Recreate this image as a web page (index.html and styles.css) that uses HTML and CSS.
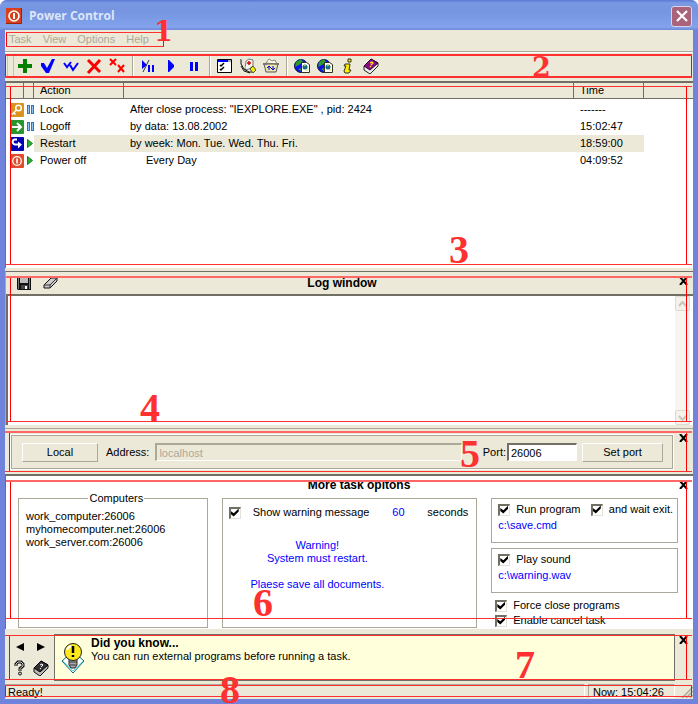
FILE: index.html
```html
<!DOCTYPE html>
<html lang="en">
<head>
    <meta charset="UTF-8">
    <meta name="viewport" content="width=device-width, initial-scale=1.0">
    <title>Power Control</title>
    <link rel="stylesheet" href="styles.css">
</head>
<body>
<div class="window">
    <header class="titlebar">
        <svg class="app-icon" width="16" height="16" viewBox="0 0 16 16"><rect width="16" height="16" fill="#d8401c"/><path d="M0 15.500h15.500V0" fill="none" stroke="#9c2408"/><circle cx="8" cy="8" r="5" fill="none" stroke="#fff" stroke-width="1.600"/><path d="M8 5v6" stroke="#fff" stroke-width="2"/></svg>
        <h1>Power Control</h1>
        <button class="win-close" aria-label="Close window"><svg width="12" height="12" viewBox="0 0 12 12"><path d="M1 1l10 10M11 1L1 11" stroke="#fff" stroke-width="2.200"/></svg></button>
    </header>

    <nav class="menubar section">
        <a href="#">Task</a>
        <a href="#">View</a>
        <a href="#">Options</a>
        <a href="#">Help</a>
        <span class="mark mark-menu"></span>
        <span class="num num-small num-1">1</span>
    </nav>

    <div class="toolbar section">
        <span class="grip"></span>
        <button aria-label="Add"><svg viewBox="0 0 16 16"><path d="M6 1h4v5h5v4h-5v5H6v-5H1V6h5z" fill="#008000"/></svg></button>
        <button aria-label="Apply"><svg viewBox="0 0 16 16"><path d="M1 5h3l3 5 5-9h3L9 15H6L1 8z" fill="#00f"/></svg></button>
        <button aria-label="Apply all"><svg viewBox="0 0 16 16"><path d="M1 5l3 4 4-5M7 7l3 5 5-7" fill="none" stroke="#00f" stroke-width="2"/></svg></button>
        <button aria-label="Delete"><svg viewBox="0 0 16 16"><path d="M2 2l12 12M14 2L2 15" stroke="#f00" stroke-width="3"/></svg></button>
        <button aria-label="Delete all"><svg viewBox="0 0 16 16"><path d="M1 1l6 6M7 1L1 7M9 7l6 7M15 7l-6 7" stroke="#f00" stroke-width="2"/></svg></button>
        <span class="sep"></span>
        <button aria-label="Start or pause"><svg viewBox="0 0 16 16"><path d="M2 2l5 5-5 4zM8 7h2v7H8zM12 7h2v7h-2z" fill="#00f"/><path d="M3 14l6-12" stroke="#334"/></svg></button>
        <button aria-label="Start"><svg viewBox="0 0 16 16"><path d="M5 2h1l5 5v2l-5 5H5z" fill="#00f"/></svg></button>
        <button aria-label="Pause"><svg viewBox="0 0 16 16"><path d="M4 4h3v9H4zM9 4h3v9H9z" fill="#00f"/></svg></button>
        <span class="sep"></span>
        <button aria-label="Task options"><svg viewBox="0 0 16 16"><path d="M.5 1.500h14v13H.5z" fill="#fff" stroke="#000"/><path d="M1 2h13v2H1z" fill="#00f"/><path d="M11 2h3v2h-3z" fill="#aaa"/><path d="M3 7l1 1 3-3M3 11l1 1 3-3" fill="none" stroke="#000" stroke-width="1.500"/></svg></button>
        <button aria-label="Diagnostics"><svg viewBox="0 0 16 16"><path d="M6 3l3-2 4 1v6l-4 3-4 1z" fill="#f4f4ee" stroke="#777"/><path d="M9 3v4M7 5h4" stroke="#d00" stroke-width="1.500"/><path d="M1 1v5l3 5 5 3h3M1 8l3 5 6 2" fill="none" stroke="#111"/><path d="M1 1h2v5l3 4" fill="none" stroke="#ddd"/><path d="M10 11l3-3 3 4-3 3z" fill="#ee0" stroke="#552"/></svg></button>
        <button aria-label="Update"><svg viewBox="0 0 16 16"><path d="M3 5l3-4 3 2 3-1 2 4z" fill="#ffd" stroke="#888"/><path d="M1 6h14l-2 8H3z" fill="#eee8b0" stroke="#555"/><path d="M0 5h4v2H0zM12 5h4v2h-4z" fill="#777"/><path d="M6 12V8M4 10l2-2 2 2M10 8v4M8 10l2 2 2-2" fill="none" stroke="#00c"/></svg></button>
        <span class="sep"></span>
        <button aria-label="Web site"><svg viewBox="0 0 16 16"><circle cx="7" cy="8" r="6.500" fill="#11e" stroke="#114"/><path d="M2 4l5-3 2 3-4 3-4 2zM4 11l4-1v4z" fill="#299a30"/><path d="M7.500 4.500h5l3 2v8h-8z" fill="#fff" stroke="#332"/><circle cx="11" cy="9" r="2.500" fill="#176a8a"/><path d="M10 8l2-1M12 12h2" stroke="#cd3"/></svg></button>
        <button aria-label="Forum"><svg viewBox="0 0 16 16"><circle cx="7" cy="8" r="6.500" fill="#11e" stroke="#114"/><path d="M2 4l5-3 2 3-4 3-4 2zM4 11l4-1v4z" fill="#299a30"/><path d="M7.500 4.500h5l3 2v8h-8z" fill="#fff" stroke="#332"/><circle cx="11" cy="9" r="2.500" fill="#176a8a"/><path d="M10 8l2-1M12 12h2" stroke="#cd3"/></svg></button>
        <button aria-label="About"><svg viewBox="0 0 16 16"><path d="M8 1h3v3H8zM5 6h5l-1 6h2l-2 3H5l-1-2 2-5H4z" fill="#fe0" stroke="#332"/></svg></button>
        <button aria-label="Help"><svg viewBox="0 0 16 16"><path d="M1 8l7-7 7 4v3l-8 8-6-4z" fill="#eee" stroke="#222"/><path d="M1 8l7-7 7 4-8 7z" fill="#8a0a8a" stroke="#303"/><path d="M7 5l2-1 1 1-2 2M7 8l1 1" fill="none" stroke="#fe0" stroke-width="1.300"/></svg></button>
        <span class="mark"></span>
        <span class="num num-small num-2">2</span>
    </div>

    <main class="tasks section">
        <table>
            <colgroup><col class="c-icon"><col class="c-state"><col class="c-action"><col><col class="c-time"><col class="c-rest"></colgroup>
            <thead>
                <tr><th></th><th></th><th>Action</th><th></th><th>Time</th><th></th></tr>
            </thead>
            <tbody>
                <tr>
                    <td><svg width="14" height="14" viewBox="0 0 14 14"><rect width="14" height="14" rx="1" fill="#d99420"/><circle cx="8.500" cy="5" r="2.800" fill="none" stroke="#fff" stroke-width="1.500"/><path d="M6.500 7L2 11.500M4 10l1.500 1.500" stroke="#fff" stroke-width="1.500"/></svg></td>
                    <td><svg width="8" height="9" viewBox="0 0 8 9"><path d="M0 0h3v9H0zM4 0h3v9H4z" fill="#2878c8"/><path d="M1.500 1v7M5.500 1v7" stroke="#8cc4f4"/></svg></td>
                    <td>Lock</td><td>After close process: "IEXPLORE.EXE" , pid: 2424</td><td>-------</td><td></td>
                </tr>
                <tr>
                    <td><svg width="14" height="14" viewBox="0 0 14 14"><rect width="14" height="14" rx="1" fill="#27962c"/><path d="M2 7h9M7 3l4 4-4 4" fill="none" stroke="#fff" stroke-width="2"/></svg></td>
                    <td><svg width="8" height="9" viewBox="0 0 8 9"><path d="M0 0h3v9H0zM4 0h3v9H4z" fill="#2878c8"/><path d="M1.500 1v7M5.500 1v7" stroke="#8cc4f4"/></svg></td>
                    <td>Logoff</td><td>by data: 13.08.2002</td><td>15:02:47</td><td></td>
                </tr>
                <tr class="selected">
                    <td><svg width="14" height="14" viewBox="0 0 14 14"><rect width="14" height="14" rx="1" fill="#0000b4"/><path d="M7 2.500H4.500C2 3 2 7 5 7.500h5" fill="none" stroke="#fff" stroke-width="2"/><path d="M8 4.500l4 3-4 4z" fill="#fff"/></svg></td>
                    <td><svg width="8" height="9" viewBox="0 0 8 9"><path d="M.5 .5v8l5-4z" fill="#2fae3a" stroke="#128018"/></svg></td>
                    <td>Restart</td><td>by week: Mon. Tue. Wed. Thu. Fri.</td><td>18:59:00</td><td></td>
                </tr>
                <tr>
                    <td><svg width="14" height="14" viewBox="0 0 14 14"><rect width="14" height="14" rx="1" fill="#e04c2c"/><circle cx="7" cy="7" r="4.300" fill="none" stroke="#fff" stroke-width="1.300"/><path d="M7 4.500v5" stroke="#fff" stroke-width="1.600"/></svg></td>
                    <td><svg width="8" height="9" viewBox="0 0 8 9"><path d="M.5 .5v8l5-4z" fill="#2fae3a" stroke="#128018"/></svg></td>
                    <td>Power off</td><td class="indent">Every Day</td><td>04:09:52</td><td></td>
                </tr>
            </tbody>
        </table>
        <span class="mark"></span>
        <span class="num num-3">3</span>
    </main>

    <section class="log section">
        <div class="log-head">
            <div class="log-tools">
                <button aria-label="Save log"><svg width="14" height="14" viewBox="0 0 14 14"><path d="M0 0h14v14H1l-1-1z" fill="#111"/><path d="M3 1h8v6H3z" fill="#bbb"/><path d="M4 9h7v4H4z" fill="#444"/><path d="M8 10h2v3H8z" fill="#fff"/><path d="M1.500 1v12M12.500 2v11" stroke="#777"/></svg></button>
                <button aria-label="Clear log"><svg width="16" height="14" viewBox="0 0 16 14"><path d="M1 9l7-7h6v3l-7 7H1z" fill="#ccc" stroke="#111"/><path d="M1 9h6l7-7M7 9v3" fill="none" stroke="#333"/></svg></button>
            </div>
            <h2>Log window</h2>
        </div>
        <button class="close" aria-label="Close log"><svg width="9" height="8" viewBox="0 0 9 8"><path d="M1 0l7 8M8 0L1 8" stroke="#000" stroke-width="2"/></svg></button>
        <div class="log-body">
            <textarea aria-label="Log" readonly></textarea>
            <div class="scroll">
                <button disabled aria-label="Scroll up"><svg width="9" height="6" viewBox="0 0 9 6"><path d="M1 5l3.500-4L8 5" fill="none" stroke="#c9c7ba" stroke-width="2"/></svg></button>
                <button disabled aria-label="Scroll down"><svg width="9" height="6" viewBox="0 0 9 6"><path d="M1 1l3.500 4L8 1" fill="none" stroke="#c9c7ba" stroke-width="2"/></svg></button>
            </div>
        </div>
        <span class="mark"></span>
        <span class="num num-4">4</span>
    </section>

    <section class="remote section">
        <div class="remote-box">
            <button class="btn">Local</button>
            <label for="address">Address:</label>
            <input id="address" class="address" type="text" value="localhost" disabled>
            <label for="port">Port:</label>
            <input id="port" class="port" type="text" value="26006">
            <button class="btn btn-port">Set port</button>
        </div>
        <button class="close" aria-label="Close connection panel"><svg width="9" height="8" viewBox="0 0 9 8"><path d="M1 0l7 8M8 0L1 8" stroke="#000" stroke-width="2"/></svg></button>
        <span class="mark"></span>
        <span class="num num-5">5</span>
    </section>

    <section class="options section">
        <h2>More task opitons</h2>
        <button class="close" aria-label="Close options"><svg width="9" height="8" viewBox="0 0 9 8"><path d="M1 0l7 8M8 0L1 8" stroke="#000" stroke-width="2"/></svg></button>
        <div class="option-cols">
            <div class="box computers">
                <h3>Computers</h3>
                <p>work_computer:26006</p>
                <p>myhomecomputer.net:26006</p>
                <p>work_server.com:26006</p>
            </div>
            <div class="box warning">
                <div class="warning-head">
                    <label><input type="checkbox" checked> Show warning message</label>
                    <span class="value">60</span>
                    <span>seconds</span>
                </div>
                <p class="message value">Warning!<br>System must restart.<br><br>Plaese save all documents.</p>
            </div>
            <div class="actions">
                <div class="box action">
                    <div class="checks">
                        <label><input type="checkbox" checked> Run program</label>
                        <label><input type="checkbox" checked> and wait exit.</label>
                    </div>
                    <p class="value">c:\save.cmd</p>
                </div>
                <div class="box action">
                    <div class="checks">
                        <label><input type="checkbox" checked> Play sound</label>
                    </div>
                    <p class="value">c:\warning.wav</p>
                </div>
                <div class="extra">
                    <label><input type="checkbox" checked> Force close programs</label>
                    <label><input type="checkbox" checked> Enable cancel task</label>
                </div>
            </div>
        </div>
        <span class="mark"></span>
        <span class="num num-6">6</span>
    </section>

    <section class="tips section">
        <div class="tip-nav">
            <button aria-label="Previous tip"><svg width="16" height="16" viewBox="0 0 16 16"><path d="M12 4v8L4 8z"/></svg></button>
            <button aria-label="Next tip"><svg width="16" height="16" viewBox="0 0 16 16"><path d="M4 4v8l8-4z"/></svg></button>
            <button aria-label="Tip help"><svg width="16" height="16" viewBox="0 0 16 16"><path d="M4 6V4l2-2h3l2 2v2L8 8.500V11" fill="none" stroke="#111" stroke-width="3"/><path d="M4 6V4l2-2h3l2 2v2L8 8.500V11" fill="none" stroke="#ccc"/><circle cx="8" cy="13.500" r="1.500" fill="#ccc" stroke="#111"/></svg></button>
            <button aria-label="Tip contents"><svg width="16" height="16" viewBox="0 0 16 16"><path d="M1 8l7-7 7 4v3l-8 8-6-4z" fill="#bbb" stroke="#111"/><path d="M1 8l7-7 7 4-8 7z" fill="#333" stroke="#000"/><path d="M7 5l2-1 1 1-2 2M7 8l1 1" fill="none" stroke="#fff"/></svg></button>
        </div>
        <div class="tip">
            <svg width="24" height="32" viewBox="0 0 24 32"><path d="M1 19l11-10 11 10-11 12z" fill="#fff" stroke="#066a7a"/><path d="M2 19l10 10 10-10" fill="none" stroke="#6de" stroke-width="1"/><path d="M8 17h8v6l-2 3h-4l-2-3z" fill="#aaa" stroke="#222"/><path d="M8 20h8M9 23h6" stroke="#333"/><circle cx="12" cy="10" r="8.500" fill="#fde820" stroke="#222"/><path d="M6 8a6 6 0 0 1 4-4" fill="none" stroke="#fff" stroke-width="2"/><path d="M12 4v7M12 13v2" stroke="#000" stroke-width="2.500"/></svg>
            <div>
                <h2>Did you know...</h2>
                <p>You can run external programs before running a task.</p>
            </div>
        </div>
        <button class="close" aria-label="Close tips"><svg width="9" height="8" viewBox="0 0 9 8"><path d="M1 0l7 8M8 0L1 8" stroke="#000" stroke-width="2"/></svg></button>
        <span class="mark"></span>
        <span class="num num-7">7</span>
    </section>

    <footer class="status section">
        <span class="ready">Ready!</span>
        <span class="now">Now: 15:04:26</span>
        <svg class="resize" width="12" height="12" viewBox="0 0 12 12"><path d="M1 12L12 1M5 12l7-7M9 12l3-3" stroke="#aca899" stroke-width="1.500"/></svg>
        <span class="mark"></span>
        <span class="num num-8">8</span>
    </footer>
</div>
</body>
</html>
```
FILE: styles.css
```css
* {
    box-sizing: border-box;
}
body {
    margin: 0;
    background: #fff;
    color: #000;
    font: 11px/13px "Liberation Sans", Arial, sans-serif;
}
h1, h2, h3, p {
    margin: 0;
    font-weight: normal;
}
h2 {
    font-size: 12px;
    font-weight: bold;
}
button, input, textarea {
    margin: 0;
    padding: 0;
    font: inherit;
    color: inherit;
}
button {
    border: 0;
    background: none;
}
svg {
    display: block;
}
.window {
    display: flex;
    flex-direction: column;
    min-height: 100vh;
    border: 5px solid #6f83dc;
    border-top: 0;
    border-radius: 7px 7px 0 0;
    background: #ece9d8;
}
.section {
    position: relative;
}

/* title bar */
.titlebar {
    display: flex;
    align-items: center;
    height: 30px;
    margin: 0 -5px;
    padding: 2px 6px 0;
    border-radius: 7px 7px 0 0;
    background: linear-gradient(#5c76d4 0, #7b9ae4 3px, #7694e0 10px, #7d9ee8 22px, #84a4ec 27px, #6e88d8 30px);
}
.titlebar h1 {
    flex: 1;
    margin-left: 7px;
    color: #dce6f8;
    font: bold 12px/18px "Open Sans", sans-serif;
}
.win-close {
    display: grid;
    place-items: center;
    width: 21px;
    height: 21px;
    border: 1px solid #dcd4ec;
    border-radius: 3px;
    background: #a9637b;
}

/* menu and toolbar */
.menubar {
    display: flex;
    gap: 11px;
    height: 22px;
    padding: 3px 4px;
    border-bottom: 1px solid #aca899;
}
.menubar a {
    color: #aca899;
    text-decoration: none;
}
.toolbar {
    display: flex;
    align-items: center;
    height: 29px;
    padding: 0 0 2px 2px;
    border-top: 1px solid #fff;
}
.toolbar button {
    width: 23px;
    height: 22px;
    padding: 3px;
}
.toolbar svg {
    width: 16px;
    height: 16px;
}
.grip {
    width: 7px;
    height: 20px;
    border: solid #c5c2b2;
    border-width: 0 1px;
}
.sep {
    width: 2px;
    height: 20px;
    margin: 0 3px;
    border-left: 1px solid #aca899;
    border-right: 1px solid #fff;
}

/* task list */
.tasks {
    flex: 1;
    min-height: 187px;
    border-top: 2px solid #716f64;
    border-left: 1px solid #716f64;
    background: #fff;
}
table {
    width: 100%;
    table-layout: fixed;
    border-collapse: separate;
    border-spacing: 0;
}
.c-icon {
    width: 18px;
}
.c-state {
    width: 10px;
}
.c-action {
    width: 90px;
}
.c-time {
    width: 70px;
}
.c-rest {
    width: 49px;
}
th, td {
    height: 17px;
    padding: 0 0 0 6px;
    font-weight: normal;
    text-align: left;
    white-space: nowrap;
}
th {
    height: 16px;
    background: #ece9d8;
    border-right: 1px solid #716f64;
    border-bottom: 1px solid #716f64;
}
th:last-child {
    border-right: 0;
}
thead::after {
    content: "";
    display: block;
    height: 2px;
}
td:nth-child(1) {
    padding-left: 4px;
}
td:nth-child(2) {
    padding-left: 3px;
}
.selected td:nth-child(n+3):nth-child(-n+5) {
    background: #ece9d8;
}
td.indent {
    padding-left: 22px;
}

/* log */
.log {
    margin-top: 3px;
    border-top: 1px solid #716f64;
    border-left: 1px solid #aca899;
}
.log-head {
    display: grid;
    grid-template-columns: 60px 1fr 75px;
    align-items: center;
    height: 22px;
    text-align: center;
}
.log-tools {
    display: flex;
    gap: 12px;
    padding-left: 11px;
}
.close {
    position: absolute;
    top: 5px;
    right: 5px;
}
.log-body {
    display: flex;
    height: 131px;
    border-top: 2px solid #716f64;
    border-left: 2px solid #716f64;
    background: #fff;
}
textarea {
    flex: 1;
    border: 0;
    outline: 0;
    resize: none;
}
.scroll {
    display: flex;
    flex-direction: column;
    justify-content: space-between;
    width: 15px;
    margin-right: 3px;
    background: #f6f5f0;
}
.scroll button {
    display: grid;
    place-items: center;
    width: 15px;
    height: 15px;
    border: 1px solid #dddbd0;
    border-radius: 2px;
    background: #f3f2eb;
}

/* connection */
.remote {
    margin-top: 3px;
    padding: 6px 20px 3px 6px;
    border-top: 1px solid #aca899;
}
.remote-box {
    display: flex;
    align-items: center;
    height: 34px;
    padding: 0 9px 0 10px;
    border: 1px solid #aca899;
    outline: 1px solid #fff;
}
.btn {
    width: 76px;
    height: 19px;
    margin-right: 8px;
    border: 1px solid #fff;
    border-right-color: #aca899;
    border-bottom-color: #aca899;
}
.btn-port {
    width: 81px;
    margin-right: 0;
}
.remote input {
    height: 18px;
    padding-left: 2px;
    border: 2px solid #716f64;
    border-right: 1px solid #fff;
    border-bottom: 1px solid #fff;
    background: #fff;
}
.remote .address {
    flex: 1;
    min-width: 0;
    margin: 0 21px 0 6px;
    border-color: #aca899 #fff #fff #aca899;
    background: #ece9d8;
    color: #aca899;
}
.remote .port {
    width: 70px;
    margin: 0 5px 0 1px;
}

/* task options */
.options {
    margin-top: 2px;
    padding: 3px 15px 1px 12px;
    border-top: 2px solid #716f64;
    border-left: 1px solid #716f64;
    background: #fff;
}
.options h2 {
    margin-left: 22px;
    text-align: center;
}
.option-cols {
    display: grid;
    grid-template-columns: 190fr 256fr 187fr;
    gap: 14px;
    margin-top: 6px;
}
.box {
    border: 1px solid #aca899;
}
.computers {
    padding-left: 7px;
}
.computers h3 {
    width: 56px;
    margin: -7px auto 5px;
    background: #fff;
    font-size: 11px;
    text-align: center;
}
.warning {
    padding: 7px 8px 0 6px;
}
.warning-head {
    display: flex;
    justify-content: space-between;
}
label {
    display: flex;
    align-items: center;
    white-space: nowrap;
}
.warning-head label input {
    margin-right: 12px;
}
.value {
    color: #00f;
}
.message {
    width: 74%;
    margin-top: 20px;
    text-align: center;
}
input[type="checkbox"] {
    appearance: none;
    width: 12px;
    height: 12px;
    margin-right: 6px;
    border: 1px solid #e4e2d6;
    border-top: 2px solid #716f64;
    border-left: 2px solid #716f64;
    background: #fff;
}
input[type="checkbox"]:checked::after {
    content: "";
    display: block;
    width: 8px;
    height: 8px;
    background: #000;
    clip-path: polygon(0 30%, 38% 60%, 100% 0, 100% 38%, 38% 100%, 0 70%);
}
.action {
    height: 45px;
    margin-bottom: 5px;
    padding: 4px 4px 0 6px;
}
.checks {
    display: flex;
    justify-content: space-between;
    margin-bottom: 3px;
}
.extra {
    padding-left: 4px;
}
.extra label {
    height: 15px;
}

/* tips */
.tips {
    display: flex;
    margin-top: 2px;
    padding: 3px 18px 2px 0;
}
.tip-nav {
    display: grid;
    grid-template-columns: 21px 21px;
    align-content: center;
    gap: 5px 0;
    width: 49px;
    padding-left: 7px;
}
.tip {
    display: flex;
    flex: 1;
    gap: 6px;
    min-height: 47px;
    padding: 2px 6px;
    border: 1px solid #716f64;
    background: #ffffdc;
}
.tip svg {
    margin-top: 5px;
}

/* status bar */
.status {
    display: flex;
    height: 16px;
    padding: 1px 0;
    line-height: 14px;
}
.status .ready {
    flex: 1;
    margin-right: 3px;
    padding-left: 2px;
    border-top: 1px solid #aca899;
    border-left: 1px solid #aca899;
    border-right: 1px solid #fff;
}
.status .now {
    width: 87px;
    padding-left: 4px;
    border: 1px solid #aca899;
    border-right-color: #fff;
    border-bottom-color: #fff;
}
.resize {
    margin: 2px 0 0 6px;
}

/* red callouts */
.mark {
    position: absolute;
    inset: 4px 1px 3px 0;
    border: solid #ff3030;
    border-width: 1px 0;
    pointer-events: none;
}
.mark::before {
    content: "";
    position: absolute;
    inset: 0 5px 0 4px;
    border: solid #f00;
    border-width: 0 1px;
}
.mark-menu {
    inset: 2px auto 4px 1px;
    width: 158px;
}
.mark-menu::before,
.toolbar .mark::before,
.status .mark::before {
    inset: 0;
}
.toolbar .mark {
    inset: 1px 1px 3px 0;
    border-top-width: 2px;
    border-bottom-width: 2px;
}
.tasks .mark {
    top: 3px;
}
.log .mark,
.remote .mark,
.options .mark {
    border-top: 2px solid #ff6666;
}
.remote .mark {
    inset: 2px 1px 0 0;
}
.options .mark {
    bottom: 10px;
}
.status .mark {
    inset: 2px 1px 2px 0;
}
.num {
    position: absolute;
    color: #ff3030;
    font: bold 40px/28px "Liberation Serif", "Times New Roman", serif;
    pointer-events: none;
}
.num-small {
    font: bold 27px/20px "DejaVu Serif", serif;
}
.num-1 {
    top: -8px;
    left: 149px;
}
.num-2 {
    top: 5px;
    left: 527px;
}
.num-3 {
    bottom: 4px;
    left: 443px;
}
.num-4 {
    bottom: 3px;
    left: 134px;
}
.num-5 {
    top: 11px;
    left: 455px;
}
.num-6 {
    bottom: 12px;
    left: 247px;
}
.num-7 {
    bottom: 4px;
    left: 510px;
}
.num-8 {
    bottom: -5px;
    left: 215px;
}
```
